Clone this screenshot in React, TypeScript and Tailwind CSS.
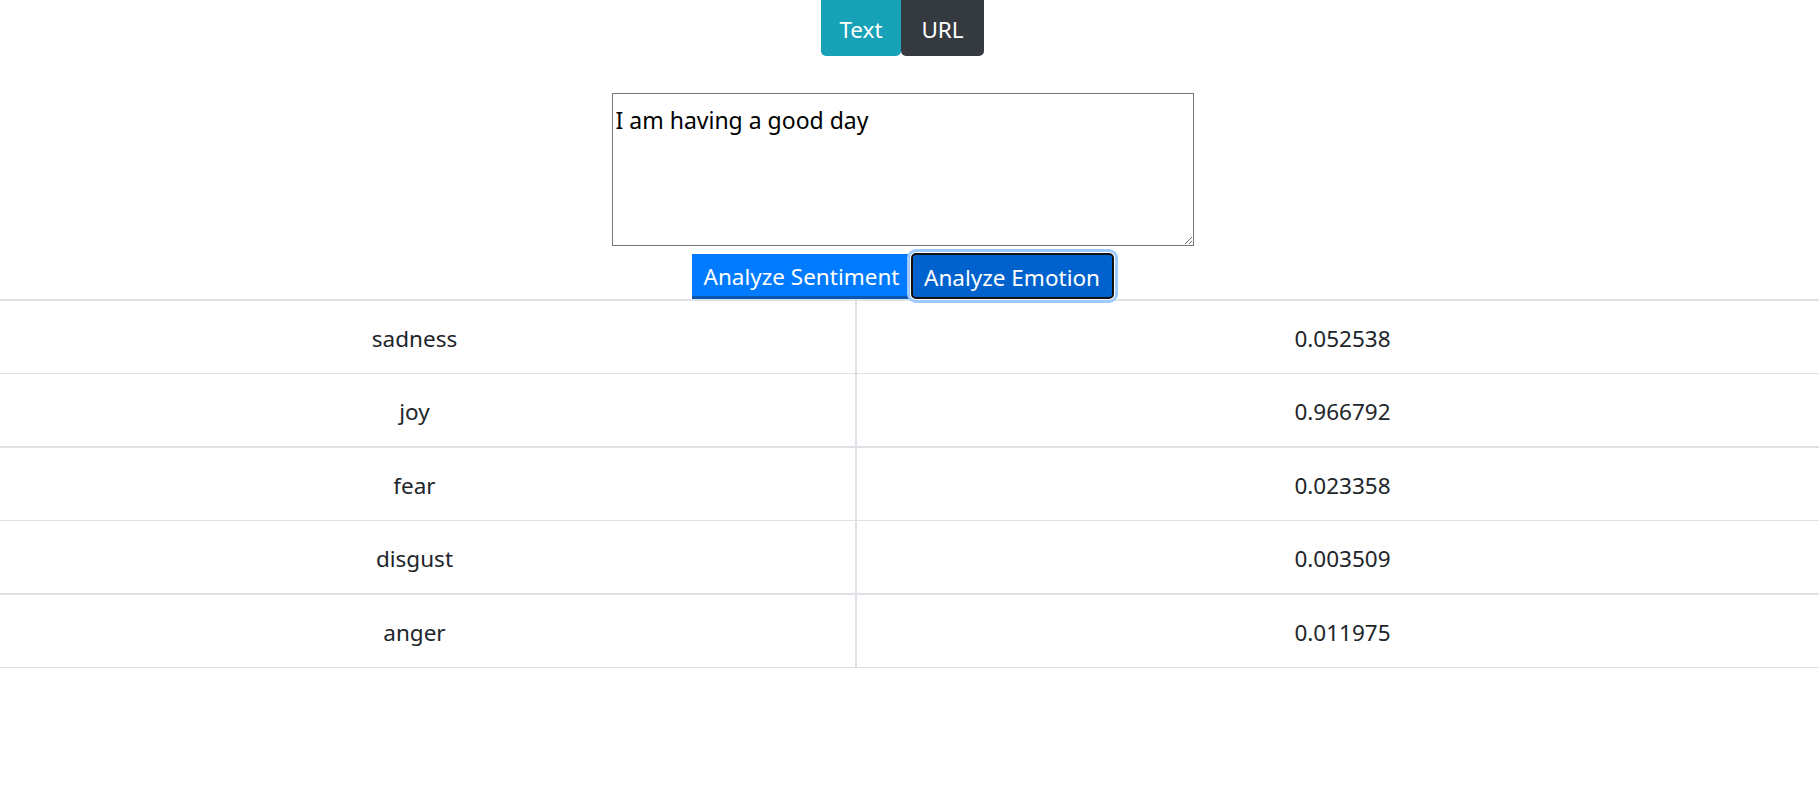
import { useState } from 'react';

const emotions = [
  { name: 'sadness', score: '0.052538', line: 'border-b' },
  { name: 'joy', score: '0.966792', line: 'border-b-2' },
  { name: 'fear', score: '0.023358', line: 'border-b' },
  { name: 'disgust', score: '0.003509', line: 'border-b-2' },
  { name: 'anger', score: '0.011975', line: 'border-b' },
];

export default function App() {
  const [text, setText] = useState('I am having a good day');

  return (
    <div className="min-h-screen bg-white text-[#212529] font-['Noto_Sans',sans-serif] text-[22.5px]">
      <div className="w-[1805px] flex flex-col items-center">
        {/* mode toggle */}
        <div className="flex">
          <button className="h-[56px] w-[80px] pt-[4px] bg-[#17a2b8] text-white rounded-b-[5px] leading-none">
            Text
          </button>
          <button className="h-[56px] w-[83px] pt-[4px] bg-[#343a40] text-white rounded-b-[5px] leading-none">
            URL
          </button>
        </div>

        <textarea
          value={text}
          onChange={(e) => setText(e.target.value)}
          className="mt-[37px] w-[582px] h-[153px] border border-[#767676] px-[3px] pt-[11px] pb-[2px] text-[23px] leading-[30px] text-black font-['Noto_Sans',sans-serif] outline-none"
        />

        <div className="mt-[8px] flex h-[45px]">
          <button className="w-[220px] h-[45px] pt-[5px] bg-[#007bff] text-white border-b-[3px] border-[#0a56ad] leading-none">
            Analyze Sentiment
          </button>
          <button className="-ml-[1px] w-[203px] h-[46px] -mt-[1px] pt-[5px] bg-[#0062cc] text-white border-2 border-[#111] rounded-[5px] leading-none shadow-[0_0_0_1px_#fff,0_0_0_4px_#9fcaff] relative">
            Analyze Emotion
          </button>
        </div>
      </div>

      {/* results */}
      <div className="border-t-2 border-[#dee2e6]">
        {emotions.map((e) => (
          <div key={e.name} className={`grid grid-cols-[857px_1fr] border-[#dee2e6] ${e.line}`}>
            <div className="h-[72px] pt-[4px] flex items-center justify-center pr-[26px] border-r-2 border-[#dee2e6]">
              {e.name}
            </div>
            <div className="h-[72px] pt-[4px] flex items-center justify-center pl-[9px]">{e.score}</div>
          </div>
        ))}
      </div>
    </div>
  );
}
